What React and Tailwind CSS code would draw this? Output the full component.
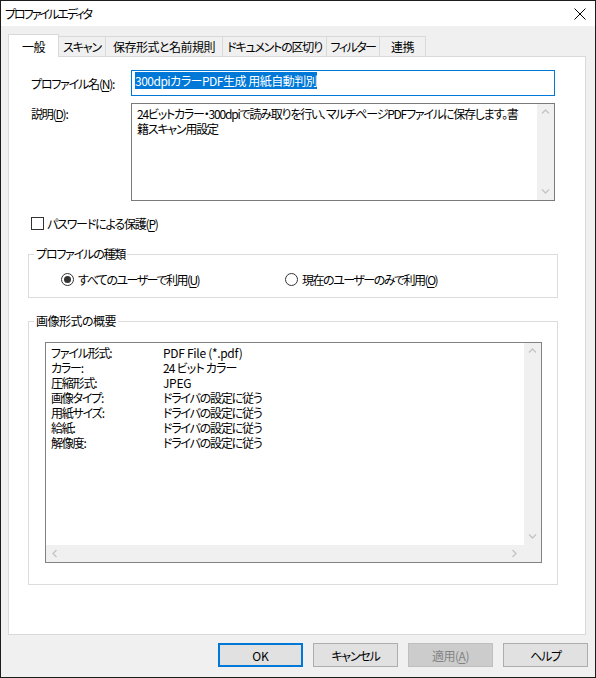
import React from 'react';

const U = ({ children }) => (
  <span className="underline underline-offset-[2px] decoration-1">{children}</span>
);

const Chevron = ({ dir }) => {
  const paths = {
    up: 'M1 5.5 L4.5 2 L8 5.5',
    down: 'M1 2.5 L4.5 6 L8 2.5',
    left: 'M5.5 1 L2 4.5 L5.5 8',
    right: 'M2.5 1 L6 4.5 L2.5 8',
  };
  return (
    <svg width="9" height="9" viewBox="0 0 9 9" className="block">
      <path d={paths[dir]} fill="none" stroke="#c4c4c4" strokeWidth="1.3" />
    </svg>
  );
};

const VScroll = ({ className }) => (
  <div className={`w-[17px] shrink-0 bg-[#f0f0f0] flex flex-col justify-between ${className || ''}`}>
    <div className="h-[17px] flex items-center justify-center"><Chevron dir="up" /></div>
    <div className="h-[17px] flex items-center justify-center"><Chevron dir="down" /></div>
  </div>
);

const Radio = ({ checked }) => (
  <span className="w-[13px] h-[13px] rounded-full border border-[#333333] bg-white flex items-center justify-center shrink-0">
    {checked && <span className="w-[7px] h-[7px] rounded-full bg-[#333333]" />}
  </span>
);

const tabs = [
  { label: 'スキャン', w: 'w-[47px]', t: 'tracking-[-1.2px]' },
  { label: '保存形式と名前規則', w: 'w-[117px]', t: 'tracking-[-0.5px]' },
  { label: 'ドキュメントの区切り', w: 'w-[104px]', t: 'tracking-[-1.2px]' },
  { label: 'フィルター', w: 'w-[53px]', t: 'tracking-[-1.5px]' },
  { label: '連携', w: 'w-[46px]', t: 'tracking-[-0.5px]' },
];

const summary = [
  ['ファイル形式:', 'PDF File (*.pdf)', 'tracking-[-0.3px]'],
  ['カラー:', '24 ビット カラー', 'tracking-[-0.8px]'],
  ['圧縮形式:', 'JPEG', 'tracking-[-0.3px]'],
  ['画像タイプ:', 'ドライバの設定に従う', ''],
  ['用紙サイズ:', 'ドライバの設定に従う', ''],
  ['給紙:', 'ドライバの設定に従う', ''],
  ['解像度:', 'ドライバの設定に従う', ''],
];

export default function App() {
  return (
    <div className="w-[596px] h-[678px] flex flex-col bg-[#f0f0f0] border border-[#1c1c1c] text-[12px] text-black font-['Noto_Sans_CJK_JP','Liberation_Sans',sans-serif] [font-feature-settings:'palt'] tracking-[-1.2px] overflow-hidden">
      {/* title bar */}
      <div className="h-[25px] bg-white flex items-center justify-between pl-[4px] pr-[8px] shrink-0">
        <span className="leading-[15px] tracking-[-2px]">プロファイルエディタ</span>
        <svg width="12" height="12" viewBox="0 0 12 12" className="mr-[1px]">
          <path d="M0.5 0.5 L11.5 11.5 M11.5 0.5 L0.5 11.5" stroke="#000" strokeWidth="1" />
        </svg>
      </div>

      <div className="flex flex-col pl-[7px] pt-[8px]">
        {/* tabs */}
        <div className="flex items-end h-[22px]">
          <div className="w-[51px] h-[23px] -mb-[1px] bg-white border border-b-0 border-[#d9d9d9] relative z-10 flex items-center justify-center leading-[15px] tracking-[-0.5px]">
            一般
          </div>
          {tabs.map((t) => (
            <div
              key={t.label}
              className={`${t.w} ${t.t} h-[20px] border-t border-r border-[#d9d9d9] bg-[#f0f0f0] flex items-center justify-center whitespace-nowrap leading-[15px]`}
            >
              {t.label}
            </div>
          ))}
        </div>

        {/* panel */}
        <div className="w-[578px] h-[579px] bg-white border border-[#d9d9d9] flex flex-col">
          <div className="flex items-center pl-[22px] mt-[13px]">
            <span className="w-[100px] leading-[15px]">プロファイル名(<U>N</U>):</span>
            <div className="w-[424px] h-[26px] border border-[#0078d7] flex items-start pl-[3px] pt-[1px]">
              <span className="bg-[#0078d7] text-white leading-[17px] whitespace-nowrap tracking-[-0.5px]">300dpiカラーPDF生成 用紙自動判別</span>
            </div>
          </div>

          <div className="flex items-start pl-[22px] mt-[7px]">
            <span className="w-[100px] leading-[15px] mt-[3px]">説明(<U>D</U>):</span>
            <div className="w-[424px] h-[98px] border border-[#7a7a7a] flex">
              <div className="flex-1 min-w-0 overflow-hidden pl-[5px] pt-[2px] leading-[15px] whitespace-nowrap">
                24ビットカラー・300dpiで読み取りを行い、マルチページPDFファイルに保存します。書
                <br />
                籍スキャン用設定
              </div>
              <VScroll />
            </div>
          </div>

          <div className="flex items-center pl-[22px] mt-[15px] h-[15px]">
            <span className="w-[13px] h-[13px] border border-[#333333] bg-white shrink-0" />
            <span className="ml-[3px] leading-[15px]">パスワードによる保護(<U>P</U>)</span>
          </div>

          <fieldset className="ml-[19px] mt-[16px] w-[530px] border border-[#dcdcdc] pb-[10px]">
            <legend className="ml-[5px] px-[2px] leading-[14px]">プロファイルの種類</legend>
            <div className="grid grid-cols-[224px_1fr] pl-[32px] mt-[11px] h-[15px]">
              <div className="flex items-center">
                <Radio checked />
                <span className="ml-[4px] leading-[15px] tracking-[-1.5px]">すべてのユーザーで利用(<U>U</U>)</span>
              </div>
              <div className="flex items-center">
                <Radio />
                <span className="ml-[4px] leading-[15px] tracking-[-1.5px]">現在のユーザーのみで利用(<U>O</U>)</span>
              </div>
            </div>
          </fieldset>

          <fieldset className="ml-[19px] mt-[16px] w-[530px] border border-[#dcdcdc] pb-[21px]">
            <legend className="ml-[5px] px-[2px] leading-[14px] tracking-[-0.5px]">画像形式の概要</legend>
            <div className="ml-[16px] mt-[14px] w-[497px] h-[221px] border border-[#828282] flex flex-col">
              <div className="flex flex-1">
                <div className="flex-1 pl-[5px] pt-[2px]">
                  {summary.map(([k, v, t]) => (
                    <div key={k} className="flex leading-[15px] whitespace-nowrap">
                      <span className="w-[112px]">{k}</span>
                      <span className={t}>{v}</span>
                    </div>
                  ))}
                </div>
                <VScroll />
              </div>
              <div className="h-[17px] bg-[#f0f0f0] flex items-center justify-between pl-[5px] pr-[22px]">
                <Chevron dir="left" />
                <Chevron dir="right" />
              </div>
            </div>
          </fieldset>
        </div>

        {/* buttons */}
        <div className="flex justify-end gap-[10px] pr-[7px] mt-[8px]">
          <button className="w-[85px] h-[24px] bg-[#e1e1e1] border-2 border-[#0078d7] leading-[15px] tracking-normal">OK</button>
          <button className="w-[85px] h-[24px] bg-[#e1e1e1] border border-[#adadad] leading-[15px]">キャンセル</button>
          <button className="w-[85px] h-[24px] bg-[#cccccc] border border-[#bfbfbf] text-[#838383] leading-[15px] tracking-[-0.5px]">
            適用(<U>A</U>)
          </button>
          <button className="w-[85px] h-[24px] bg-[#e1e1e1] border border-[#adadad] leading-[15px]">ヘルプ</button>
        </div>
      </div>
    </div>
  );
}
